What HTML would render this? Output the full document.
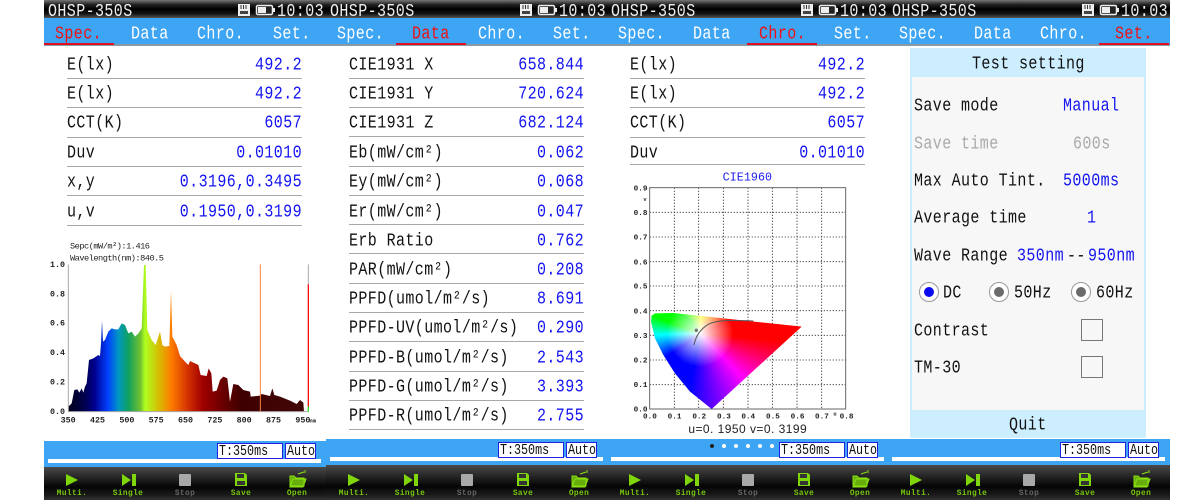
<!DOCTYPE html>
<html><head><meta charset="utf-8"><style>
html,body{margin:0;padding:0;background:#fff;width:1200px;height:500px;overflow:hidden}
body{position:relative;font-family:"Liberation Mono",monospace;filter:blur(.35px)}
.p{position:absolute;top:0;width:282px;height:500px;overflow:hidden}
.t,.v,.a,.s{position:absolute;font-size:15px;letter-spacing:.4px;line-height:18px;height:18px;white-space:pre;transform:translateY(2px) scaleY(1.2);color:#111}
.top{position:absolute;left:0;top:0;width:282px;height:18px;background:linear-gradient(#777,#222 25%,#000 50%,#111 75%,#555)}
.top .t{color:#eee;top:2px;transform:translateY(1.5px) scaleY(1.2)}
.blue{position:absolute;left:0;top:18px;width:282px;height:26px;background:#3ea5f5;border-bottom:2px solid #8a99a6}
.blue .t{color:#fff;top:6px}
.blue .t.r{color:#f01010}
.ul{position:absolute;top:25px;width:70px;height:2px;background:#e01020}
.l{position:absolute;left:23px;width:235px;height:1px;background:#a8a8a8}
.a{left:23px}
.v{right:24px;color:#1414f0;text-align:right}
.bar{position:absolute;left:0;width:282px;background:#3ea5f5}
.wb{position:absolute;left:4px;width:273px;height:4px;background:#fff}
.bx{position:absolute;height:14px;background:#fff;border:1px solid #2020e0;color:#111;font-size:11.7px;line-height:14px;overflow:hidden;white-space:pre;padding-left:1px;box-sizing:content-box}
.bx span{display:inline-block;transform:scaleY(1.3)}
.dk{position:absolute;left:0;bottom:0;width:282px;background:linear-gradient(#4a4a4a,#222 35%,#050505 60%,#1a1a1a 85%,#333)}
.m{position:absolute;top:490px;width:56px;text-align:center;font-size:7.8px;line-height:9px;font-weight:bold;color:#78c80c;letter-spacing:.4px}
.b{color:#1414f0}.g{color:#aaa}
.rd{position:absolute;width:18px;height:18px;border:1px solid #999;border-radius:50%;background:#fff}
.rd i{position:absolute;left:4px;top:4px;width:10px;height:10px;border-radius:50%;background:#6b6b6b}
.ck{position:absolute;left:1081px;width:20px;height:20px;border:1px solid #777;background:#f7f7f7}
svg text{font-family:"Liberation Mono",monospace}
</style></head><body>

<!-- PANEL 1 -->
<div class="p" style="left:44px">
<div class="top"><span class="t" style="left:4px">OHSP-350S</span><svg style="position:absolute;left:193px;top:3px" width="40" height="14"><path d="M1 1h12v12H1z" fill="#eee"/><path d="M4 2v4M6.5 2v4M9 2v4" stroke="#333" stroke-width="1"/><rect x="3" y="8" width="8" height="3" fill="#444"/><rect x="19.500" y="2.500" width="16" height="9" rx="1.500" fill="#222" stroke="#eee" stroke-width="1.500"/><rect x="21" y="4" width="8" height="6" fill="#eee"/><rect x="36" y="5" width="2" height="4" fill="#eee"/></svg><span class="t" style="left:233px">10:03</span></div>
<div class="blue"><span class="t r" style="left:11px">Spec.</span><span class="t" style="left:87px">Data</span><span class="t" style="left:153px">Chro.</span><span class="t" style="left:229px">Set.</span><div class="ul" style="left:0"></div></div>
<span class="a" style="top:55px">E(lx)</span><span class="v" style="top:55px">492.2</span><div class="l" style="top:78px"></div>
<span class="a" style="top:84px">E(lx)</span><span class="v" style="top:84px">492.2</span><div class="l" style="top:107px"></div>
<span class="a" style="top:113px">CCT(K)</span><span class="v" style="top:113px">6057</span><div class="l" style="top:137px"></div>
<span class="a" style="top:143px">Duv</span><span class="v" style="top:143px">0.01010</span><div class="l" style="top:166px"></div>
<span class="a" style="top:172px">x,y</span><span class="v" style="top:172px">0.3196,0.3495</span><div class="l" style="top:195px"></div>
<span class="a" style="top:202px">u,v</span><span class="v" style="top:202px">0.1950,0.3199</span><div class="l" style="top:225px"></div>
<div class="bar" style="top:441px;height:26px"><div class="wb" style="top:18px"></div></div>
<div class="bx" style="left:173px;top:443px;width:63px"><span>T:350ms</span></div><div class="bx" style="left:241px;top:443px;width:28px"><span>Auto</span></div>
<div class="dk" style="height:33px"></div>
<svg style="position:absolute;left:0;top:467px" width="282" height="24"><path d="M22 7l12 6-12 6z" fill="#7fd60a"/><path d="M78 7l9 6-9 6zM88 7h4v12h-4z" fill="#7fd60a"/><rect x="135" y="7" width="12" height="12" rx="1" fill="#a8a8a8"/><path d="M191 6h10l2 2v11h-12z" fill="#7fd60a"/><rect x="193" y="7" width="7" height="4" fill="#333"/><rect x="193" y="14" width="8" height="4" fill="#333"/><path d="M246 9h4l2 2h8v8h-14zM246 20l3-8h13l-3 8z" fill="#67ad0c" stroke="#8be010" stroke-width="1"/><path d="M254 7l6-2M261 3v3" stroke="#8be010" stroke-width="1"/></svg>
<span class="m" style="left:0">Multi.</span><span class="m" style="left:56px">Single</span><span class="m" style="left:113px;color:#666">Stop</span><span class="m" style="left:169px">Save</span><span class="m" style="left:225px">Open</span>
</div>

<!-- PANEL 2 -->
<div class="p" style="left:326px">
<div class="top"><span class="t" style="left:4px">OHSP-350S</span><svg style="position:absolute;left:193px;top:3px" width="40" height="14"><path d="M1 1h12v12H1z" fill="#eee"/><path d="M4 2v4M6.5 2v4M9 2v4" stroke="#333" stroke-width="1"/><rect x="3" y="8" width="8" height="3" fill="#444"/><rect x="19.500" y="2.500" width="16" height="9" rx="1.500" fill="#222" stroke="#eee" stroke-width="1.500"/><rect x="21" y="4" width="8" height="6" fill="#eee"/><rect x="36" y="5" width="2" height="4" fill="#eee"/></svg><span class="t" style="left:233px">10:03</span></div>
<div class="blue"><span class="t" style="left:11px">Spec.</span><span class="t r" style="left:86px">Data</span><span class="t" style="left:152px">Chro.</span><span class="t" style="left:227px">Set.</span><div class="ul" style="left:70px"></div></div>
<span class="a" style="top:55px">CIE1931 X</span><span class="v" style="top:55px">658.844</span><div class="l" style="top:78px"></div>
<span class="a" style="top:84px">CIE1931 Y</span><span class="v" style="top:84px">720.624</span><div class="l" style="top:107px"></div>
<span class="a" style="top:113px">CIE1931 Z</span><span class="v" style="top:113px">682.124</span><div class="l" style="top:136px"></div>
<span class="a" style="top:143px">Eb(mW/cm²)</span><span class="v" style="top:143px">0.062</span><div class="l" style="top:166px"></div>
<span class="a" style="top:172px">Ey(mW/cm²)</span><span class="v" style="top:172px">0.068</span><div class="l" style="top:195px"></div>
<span class="a" style="top:202px">Er(mW/cm²)</span><span class="v" style="top:202px">0.047</span><div class="l" style="top:224px"></div>
<span class="a" style="top:231px">Erb Ratio</span><span class="v" style="top:231px">0.762</span><div class="l" style="top:253px"></div>
<span class="a" style="top:260px">PAR(mW/cm²)</span><span class="v" style="top:260px">0.208</span><div class="l" style="top:283px"></div>
<span class="a" style="top:289px">PPFD(umol/m²/s)</span><span class="v" style="top:289px">8.691</span><div class="l" style="top:312px"></div>
<span class="a" style="top:318px">PPFD-UV(umol/m²/s)</span><span class="v" style="top:318px">0.290</span><div class="l" style="top:341px"></div>
<span class="a" style="top:348px">PPFD-B(umol/m²/s)</span><span class="v" style="top:348px">2.543</span><div class="l" style="top:371px"></div>
<span class="a" style="top:377px">PPFD-G(umol/m²/s)</span><span class="v" style="top:377px">3.393</span><div class="l" style="top:400px"></div>
<span class="a" style="top:406px">PPFD-R(umol/m²/s)</span><span class="v" style="top:406px">2.755</span><div class="l" style="top:429px"></div>
<div class="bar" style="top:439px;height:26px"><div class="wb" style="top:18px"></div></div>
<div class="bx" style="left:172px;top:442px;width:63px"><span>T:350ms</span></div><div class="bx" style="left:240px;top:442px;width:28px"><span>Auto</span></div>
<div class="dk" style="height:35px"></div>
<svg style="position:absolute;left:0;top:467px" width="282" height="24"><path d="M22 7l12 6-12 6z" fill="#7fd60a"/><path d="M78 7l9 6-9 6zM88 7h4v12h-4z" fill="#7fd60a"/><rect x="135" y="7" width="12" height="12" rx="1" fill="#a8a8a8"/><path d="M191 6h10l2 2v11h-12z" fill="#7fd60a"/><rect x="193" y="7" width="7" height="4" fill="#333"/><rect x="193" y="14" width="8" height="4" fill="#333"/><path d="M246 9h4l2 2h8v8h-14zM246 20l3-8h13l-3 8z" fill="#67ad0c" stroke="#8be010" stroke-width="1"/><path d="M254 7l6-2M261 3v3" stroke="#8be010" stroke-width="1"/></svg>
<span class="m" style="left:0">Multi.</span><span class="m" style="left:56px">Single</span><span class="m" style="left:113px;color:#666">Stop</span><span class="m" style="left:169px">Save</span><span class="m" style="left:225px">Open</span>
</div>

<!-- PANEL 3 -->
<div class="p" style="left:607px">
<div class="top"><span class="t" style="left:4px">OHSP-350S</span><svg style="position:absolute;left:193px;top:3px" width="40" height="14"><path d="M1 1h12v12H1z" fill="#eee"/><path d="M4 2v4M6.5 2v4M9 2v4" stroke="#333" stroke-width="1"/><rect x="3" y="8" width="8" height="3" fill="#444"/><rect x="19.500" y="2.500" width="16" height="9" rx="1.500" fill="#222" stroke="#eee" stroke-width="1.500"/><rect x="21" y="4" width="8" height="6" fill="#eee"/><rect x="36" y="5" width="2" height="4" fill="#eee"/></svg><span class="t" style="left:233px">10:03</span></div>
<div class="blue"><span class="t" style="left:11px">Spec.</span><span class="t" style="left:86px">Data</span><span class="t r" style="left:152px">Chro.</span><span class="t" style="left:227px">Set.</span><div class="ul" style="left:140px"></div></div>
<span class="a" style="top:55px">E(lx)</span><span class="v" style="top:55px">492.2</span><div class="l" style="top:78px"></div>
<span class="a" style="top:84px">E(lx)</span><span class="v" style="top:84px">492.2</span><div class="l" style="top:107px"></div>
<span class="a" style="top:113px">CCT(K)</span><span class="v" style="top:113px">6057</span><div class="l" style="top:137px"></div>
<span class="a" style="top:143px">Duv</span><span class="v" style="top:143px">0.01010</span><div class="l" style="top:164px"></div>
<div class="bar" style="top:439px;height:26px"><div class="wb" style="top:18px"></div></div>
<svg style="position:absolute;left:100px;top:441px" width="70" height="10"><circle cx="5" cy="5" r="2" fill="#222"/><circle cx="17" cy="5" r="2" fill="#fff"/><circle cx="29" cy="5" r="2" fill="#fff"/><circle cx="41" cy="5" r="2" fill="#fff"/><circle cx="53" cy="5" r="2" fill="#fff"/><circle cx="65" cy="5" r="2" fill="#fff"/></svg>
<div class="bx" style="left:172px;top:442px;width:63px"><span>T:350ms</span></div><div class="bx" style="left:240px;top:442px;width:28px"><span>Auto</span></div>
<div class="dk" style="height:35px"></div>
<svg style="position:absolute;left:0;top:467px" width="282" height="24"><path d="M22 7l12 6-12 6z" fill="#7fd60a"/><path d="M78 7l9 6-9 6zM88 7h4v12h-4z" fill="#7fd60a"/><rect x="135" y="7" width="12" height="12" rx="1" fill="#a8a8a8"/><path d="M191 6h10l2 2v11h-12z" fill="#7fd60a"/><rect x="193" y="7" width="7" height="4" fill="#333"/><rect x="193" y="14" width="8" height="4" fill="#333"/><path d="M246 9h4l2 2h8v8h-14zM246 20l3-8h13l-3 8z" fill="#67ad0c" stroke="#8be010" stroke-width="1"/><path d="M254 7l6-2M261 3v3" stroke="#8be010" stroke-width="1"/></svg>
<span class="m" style="left:0">Multi.</span><span class="m" style="left:56px">Single</span><span class="m" style="left:113px;color:#666">Stop</span><span class="m" style="left:169px">Save</span><span class="m" style="left:225px">Open</span>
</div>

<!-- PANEL 4 -->
<div class="p" style="left:888px">
<div class="top"><span class="t" style="left:4px">OHSP-350S</span><svg style="position:absolute;left:193px;top:3px" width="40" height="14"><path d="M1 1h12v12H1z" fill="#eee"/><path d="M4 2v4M6.5 2v4M9 2v4" stroke="#333" stroke-width="1"/><rect x="3" y="8" width="8" height="3" fill="#444"/><rect x="19.500" y="2.500" width="16" height="9" rx="1.500" fill="#222" stroke="#eee" stroke-width="1.500"/><rect x="21" y="4" width="8" height="6" fill="#eee"/><rect x="36" y="5" width="2" height="4" fill="#eee"/></svg><span class="t" style="left:233px">10:03</span></div>
<div class="blue"><span class="t" style="left:11px">Spec.</span><span class="t" style="left:86px">Data</span><span class="t" style="left:152px">Chro.</span><span class="t r" style="left:227px">Set.</span><div class="ul" style="left:211px"></div></div>
<div class="bar" style="top:439px;height:26px"><div class="wb" style="top:18px"></div></div>
<div class="bx" style="left:172px;top:442px;width:63px"><span>T:350ms</span></div><div class="bx" style="left:240px;top:442px;width:28px"><span>Auto</span></div>
<div class="dk" style="height:35px"></div>
<svg style="position:absolute;left:0;top:467px" width="282" height="24"><path d="M22 7l12 6-12 6z" fill="#7fd60a"/><path d="M78 7l9 6-9 6zM88 7h4v12h-4z" fill="#7fd60a"/><rect x="135" y="7" width="12" height="12" rx="1" fill="#a8a8a8"/><path d="M191 6h10l2 2v11h-12z" fill="#7fd60a"/><rect x="193" y="7" width="7" height="4" fill="#333"/><rect x="193" y="14" width="8" height="4" fill="#333"/><path d="M246 9h4l2 2h8v8h-14zM246 20l3-8h13l-3 8z" fill="#67ad0c" stroke="#8be010" stroke-width="1"/><path d="M254 7l6-2M261 3v3" stroke="#8be010" stroke-width="1"/></svg>
<span class="m" style="left:0">Multi.</span><span class="m" style="left:56px">Single</span><span class="m" style="left:113px;color:#666">Stop</span><span class="m" style="left:169px">Save</span><span class="m" style="left:225px">Open</span>
</div>

<!-- Settings dialog -->
<div style="position:absolute;left:910px;top:48px;width:236px;height:390px;background:#cdeeff;border-radius:0 0 2px 2px"></div>
<div style="position:absolute;left:912px;top:77px;width:232px;height:333px;background:#f7f7f7"></div>
<span class="s" style="left:972px;top:54px">Test setting</span>
<span class="s" style="left:914px;top:96px">Save mode</span><span class="s b" style="left:1063px;top:96px">Manual</span>
<span class="s g" style="left:914px;top:134px">Save time</span><span class="s g" style="left:1073px;top:134px">600s</span>
<span class="s" style="left:914px;top:171px">Max Auto Tint.</span><span class="s b" style="left:1063px;top:171px">5000ms</span>
<span class="s" style="left:914px;top:208px">Average time</span><span class="s b" style="left:1087px;top:208px">1</span>
<span class="s" style="left:914px;top:246px">Wave Range</span><span class="s b" style="left:1017px;top:246px">350nm</span><span class="s" style="left:1067px;top:246px">--</span><span class="s b" style="left:1088px;top:246px">950nm</span>
<div class="rd" style="left:919px;top:282px"><i style="background:#0a0aee"></i></div><span class="s" style="left:943px;top:283px">DC</span>
<div class="rd" style="left:989px;top:282px"><i></i></div><span class="s" style="left:1014px;top:283px">50Hz</span>
<div class="rd" style="left:1071px;top:282px"><i></i></div><span class="s" style="left:1096px;top:283px">60Hz</span>
<span class="s" style="left:914px;top:321px">Contrast</span><div class="ck" style="top:319px"></div>
<span class="s" style="left:914px;top:358px">TM-30</span><div class="ck" style="top:356px"></div>
<span class="s" style="left:1009px;top:415px">Quit</span>

<!-- Spectrum -->
<svg style="position:absolute;left:40px;top:230px" width="290" height="200" viewBox="0 0 870 600">
<defs><linearGradient id="sp" gradientUnits="userSpaceOnUse" x1="85" y1="0" x2="805" y2="0">
<stop offset="0" stop-color="#000018"/><stop offset=".07" stop-color="#000050"/><stop offset=".11" stop-color="#000090"/><stop offset=".165" stop-color="#0040ff"/><stop offset=".21" stop-color="#0098c0"/><stop offset=".25" stop-color="#10a060"/><stop offset=".30" stop-color="#70c030"/><stop offset=".32" stop-color="#b0ff20"/><stop offset=".38" stop-color="#d8b800"/><stop offset=".43" stop-color="#ff7a00"/><stop offset=".50" stop-color="#d03000"/><stop offset=".56" stop-color="#a00000"/><stop offset=".64" stop-color="#6c0000"/><stop offset=".72" stop-color="#3e0000"/><stop offset="1" stop-color="#440808"/></linearGradient></defs>
<polygon fill="url(#sp)" points="85,545 85,530 95,520 103,480 112,478 118,488 125,475 130,488 135,470 140,460 147,390 160,385 175,375 180,378 183,340 186,272 189,335 195,330 205,305 215,295 225,298 235,298 245,280 255,285 265,310 275,305 285,320 295,310 305,295 312,105 317,105 322,300 335,330 347,345 360,305 367,345 375,350 388,348 393,182 397,320 410,345 420,378 435,395 445,405 450,393 475,405 482,435 500,438 506,415 514,430 518,485 530,482 540,450 550,440 562,445 570,515 580,462 595,465 610,480 630,485 632,500 660,497 665,492 690,498 697,475 703,495 720,500 750,512 770,522 780,510 790,518 792,545"/>
<path d="M85 103V545H805" fill="none" stroke="#aaa" stroke-width="3"/>
<path d="M661 103V545" stroke="#f98040" stroke-width="3"/>
<path d="M805 103V163" stroke="#aaa" stroke-width="3"/><path d="M805 163V530" stroke="#f41010" stroke-width="4"/><path d="M805 530V545" stroke="#22dd22" stroke-width="4"/>
<g font-size="25" font-weight="bold" fill="#222"><text x="30" y="111">1.0</text><text x="30" y="199">0.8</text><text x="30" y="287">0.6</text><text x="30" y="375">0.4</text><text x="30" y="463">0.2</text><text x="30" y="552">0.0</text>
<text x="62" y="578">350</text><text x="150" y="578">425</text><text x="238" y="578">500</text><text x="326" y="578">575</text><text x="414" y="578">650</text><text x="502" y="578">725</text><text x="590" y="578">800</text><text x="678" y="578">875</text><text x="766" y="578">950</text><text x="808" y="578" font-size="17">nm</text></g>
<g font-size="26" fill="#222"><text x="90" y="56" textLength="240">Sepc(mW/m²):1.416</text><text x="90" y="92" textLength="282">Wavelength(nm):840.5</text></g>
</svg>

<!-- CIE -->
<svg style="position:absolute;left:620px;top:165px" width="240" height="275" viewBox="0 0 720 825">
<g stroke="#333" stroke-width="2.500" stroke-dasharray="4 5" fill="none">
<path d="M163 68V732M236 68V732M310 68V732M384 68V732M457 68V732M531 68V732M605 68V732"/>
<path d="M89 142H678M89 216H678M89 290H678M89 363H678M89 437H678M89 511H678M89 585H678M89 659H678"/></g>
<rect x="89" y="68" width="588" height="664" fill="none" stroke="#666" stroke-width="3"/>
<foreignObject x="0" y="0" width="720" height="825"><div xmlns="http://www.w3.org/1999/xhtml" style="width:720px;height:825px;background:radial-gradient(circle 100px at 240px 505px,#fff 0,rgba(255,255,255,.7) 30%,rgba(255,255,255,0) 100%),conic-gradient(from 0deg at 240px 505px,#ff0 5deg,#f00 65deg,#f00 95deg,#f0f 136deg,#00f 190deg,#00f 235deg,#0ff 268deg,#0f0 290deg,#0f0 320deg,#ff0 365deg);clip-path:polygon(275px 732px,545px 485px,160px 444px,105px 445px,95px 452px,93px 470px,105px 520px,130px 570px,165px 625px,210px 680px)"></div></foreignObject>
<path d="M222 540C228 510 245 490 265 478C290 465 330 465 400 468" fill="none" stroke="#555" stroke-width="3"/>
<circle cx="229" cy="496" r="5" fill="#777"/>
<g font-size="23" font-weight="bold" fill="#222"><text x="41" y="77">0.9</text><text x="41" y="150">0.8</text><text x="41" y="224">0.7</text><text x="41" y="298">0.6</text><text x="41" y="371">0.5</text><text x="41" y="445">0.4</text><text x="41" y="519">0.3</text><text x="41" y="593">0.2</text><text x="41" y="666">0.1</text><text x="41" y="740">0.0</text>
<text x="69" y="760">0.0</text><text x="143" y="760">0.1</text><text x="217" y="760">0.2</text><text x="291" y="760">0.3</text><text x="364" y="760">0.4</text><text x="438" y="760">0.5</text><text x="512" y="760">0.6</text><text x="585" y="760">0.7</text><text x="659" y="760">0.8</text><text x="640" y="752" font-size="16">u</text><text x="70" y="108" font-size="16">v</text></g>
<text x="308" y="46" font-size="35" fill="#1a1aee" textLength="148">CIE1960</text>
<text x="205" y="804" font-size="36" fill="#222" textLength="355" style="font-family:'Liberation Sans',sans-serif">u=0. 1950  v=0. 3199</text>
</svg>
</body></html>
